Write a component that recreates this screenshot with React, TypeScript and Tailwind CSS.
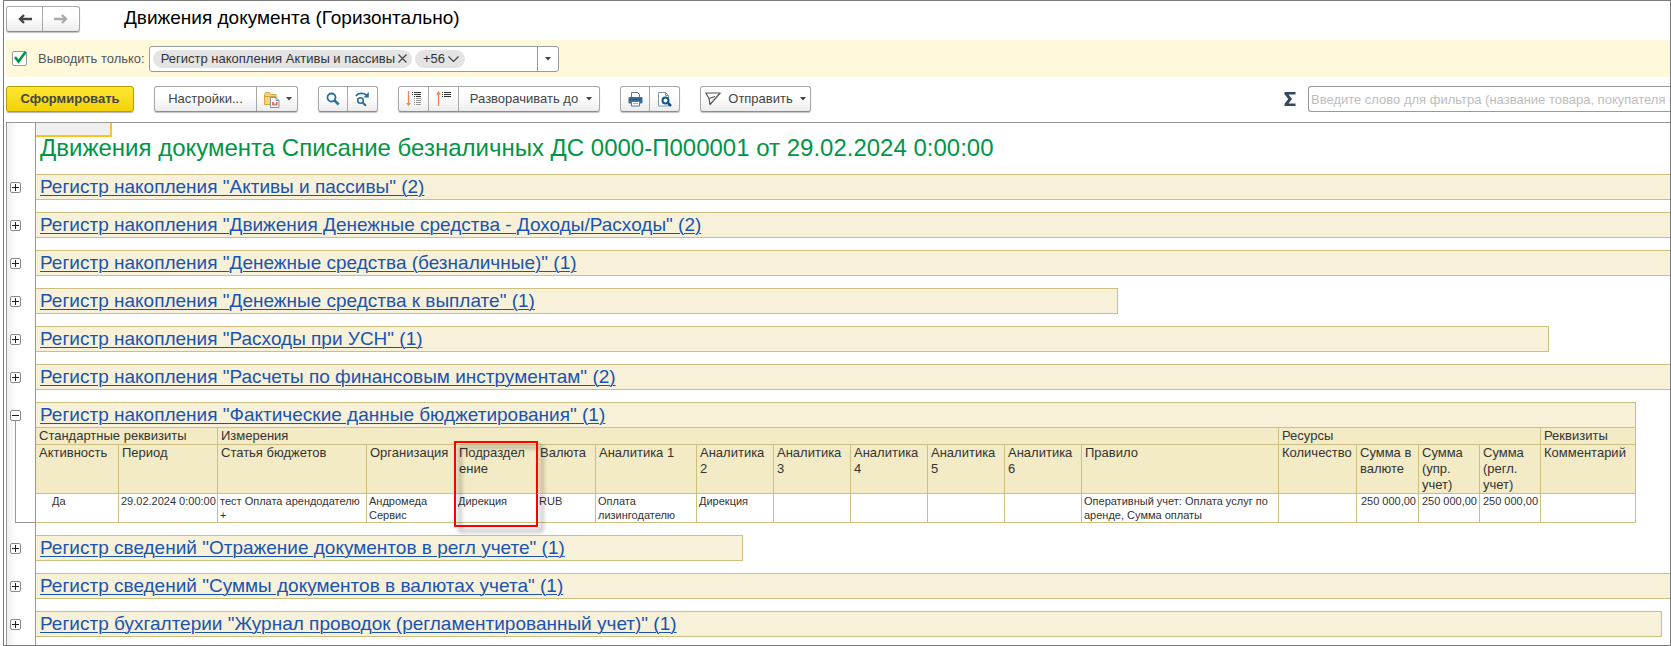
import type { ReactNode } from "react";

type Register = {
  title: string;
  // Class for the bar's width; bars without it run past the right edge
  width?: string;
  expanded?: boolean;
};

const registers: Register[] = [
  { title: 'Регистр накопления "Активы и пассивы" (2)' },
  {
    title: 'Регистр накопления "Движения Денежные средства - Доходы/Расходы" (2)',
  },
  { title: 'Регистр накопления "Денежные средства (безналичные)" (1)' },
  {
    title: 'Регистр накопления "Денежные средства к выплате" (1)',
    width: "w-[1082px] border-r",
  },
  {
    title: 'Регистр накопления "Расходы при УСН" (1)',
    width: "w-[1513px] border-r",
  },
  { title: 'Регистр накопления "Расчеты по финансовым инструментам" (2)' },
  {
    title: 'Регистр накопления "Фактические данные бюджетирования" (1)',
    width: "w-[1600px] border-r",
    expanded: true,
  },
  {
    title: 'Регистр сведений "Отражение документов в регл учете" (1)',
    width: "w-[707px] border-r",
  },
  { title: 'Регистр сведений "Суммы документов в валютах учета" (1)' },
  {
    title:
      'Регистр бухгалтерии "Журнал проводок (регламентированный учет)" (1)',
    width: "w-[1626px] border-r",
  },
];

const columns = [
  { name: "Активность", width: 83, value: "Да", cell: "pl-4" },
  {
    name: "Период",
    width: 99,
    value: "29.02.2024 0:00:00",
    cell: "whitespace-nowrap",
  },
  { name: "Статья бюджетов", width: 149, value: "тест Оплата арендодателю +" },
  { name: "Организация", width: 89, value: "Андромеда Сервис" },
  { name: "Подразделение", width: 81, value: "Дирекция", marked: true },
  { name: "Валюта", width: 59, value: "RUB" },
  { name: "Аналитика 1", width: 101, value: "Оплата лизингодателю" },
  { name: "Аналитика 2", width: 77, value: "Дирекция" },
  { name: "Аналитика 3", width: 77, value: "" },
  { name: "Аналитика 4", width: 77, value: "" },
  { name: "Аналитика 5", width: 77, value: "" },
  { name: "Аналитика 6", width: 77, value: "" },
  {
    name: "Правило",
    width: 197,
    value: "Оперативный учет: Оплата услуг по аренде, Сумма оплаты",
  },
  { name: "Количество", width: 78, value: "" },
  { name: "Сумма в валюте", width: 62, value: "250 000,00", cell: "text-right" },
  {
    name: "Сумма (упр. учет)",
    width: 61,
    value: "250 000,00",
    cell: "text-right",
  },
  {
    name: "Сумма (регл. учет)",
    width: 61,
    value: "250 000,00",
    cell: "text-right",
  },
  { name: "Комментарий", width: 95, value: "" },
];

const groups = [
  { name: "Стандартные реквизиты", span: 2 },
  { name: "Измерения", span: 11 },
  { name: "Ресурсы", span: 4 },
  { name: "Реквизиты", span: 1 },
];

function Caret() {
  return (
    <svg width="6" height="4" viewBox="0 0 6 4" aria-hidden="true">
      <path d="M0 0h6L3 3.5z" fill="#444" />
    </svg>
  );
}

function ButtonGroup({ children }: { children: ReactNode }) {
  return (
    <div className="flex h-[26px] shrink-0 divide-x divide-[#a8a8a8] rounded-[3px] border border-[#a8a8a8] border-b-[#8c8c8c] bg-linear-to-b from-white from-40% to-[#ececec] shadow-[0_1px_1px_rgba(0,0,0,0.25)]">
      {children}
    </div>
  );
}

function ToolButton({
  label,
  className,
  children,
}: {
  label?: string;
  className: string;
  children: ReactNode;
}) {
  return (
    <button
      type="button"
      aria-label={label}
      className={`flex items-center justify-center text-[#444] ${className}`}
    >
      {children}
    </button>
  );
}

function Arrow({ color, flip }: { color: string; flip?: boolean }) {
  return (
    <svg
      width="14"
      height="12"
      viewBox="0 0 14 12"
      fill="none"
      stroke={color}
      strokeWidth="2.4"
      className={flip ? "rotate-180" : ""}
      aria-hidden="true"
    >
      <path d="M14 6H2M6 2 2 6l4 4" />
    </svg>
  );
}

function FolderIcon() {
  return (
    <svg width="17" height="17" viewBox="0 0 17 17" aria-hidden="true">
      <path
        d="M1.5 13.5V3.5l1-2h4l1 2h5.5v10z"
        fill="#f5d47c"
        stroke="#d0a548"
      />
      <path d="M1.5 5.5h11.5" stroke="#d0a548" />
      <path d="M7.5 6.5h5.5l3 3v7H7.5z" fill="#fff" stroke="#7d93a8" />
      <path d="M13 6.5v3h3" fill="none" stroke="#7d93a8" />
      <path d="M10 14.5V11" stroke="#e53935" strokeWidth="1.5" />
      <path d="M12 14.5v-2" stroke="#43a047" strokeWidth="1.5" />
      <path d="M13.8 14.5V11" stroke="#e53935" strokeWidth="1.2" />
    </svg>
  );
}

function SearchIcon() {
  return (
    <svg
      width="14"
      height="14"
      viewBox="0 0 14 14"
      fill="none"
      stroke="#2a6f9e"
      aria-hidden="true"
    >
      <circle cx="5.5" cy="5.5" r="4" strokeWidth="1.8" />
      <path d="m8.5 8.5 4.2 4" strokeWidth="2.6" />
    </svg>
  );
}

function SearchNextIcon() {
  return (
    <svg
      width="15"
      height="15"
      viewBox="0 0 15 15"
      fill="none"
      stroke="#2a6f9e"
      aria-hidden="true"
    >
      <path d="M1 4C3 .8 8.5.8 11.5 3" strokeWidth="1.8" />
      <path d="M13.8 0v5.5H8.5z" fill="#2a6f9e" stroke="none" />
      <circle cx="5.5" cy="8.5" r="2.8" strokeWidth="1.6" />
      <path d="m7.8 10.8 3.2 3" strokeWidth="2.2" />
    </svg>
  );
}

function ExpandIcon() {
  return (
    <svg width="16" height="16" viewBox="0 0 16 16" aria-hidden="true">
      <path d="M2.5 0v13" stroke="#f0855a" strokeWidth="1.4" />
      <path d="M0 12h5l-2.5 3z" fill="#f0855a" />
      <path
        d="M6 1.5h1M8 1.5h7M6 3.5h1M8 3.5h7M8 5.5h1M10 5.5h5"
        stroke="#333"
      />
      <path
        d="M8 7.5h1M10 7.5h5M8 9.5h1M10 9.5h5M8 11.5h1M10 11.5h5M8 13.5h1M10 13.5h5"
        stroke="#999"
      />
    </svg>
  );
}

function CollapseIcon() {
  return (
    <svg width="16" height="16" viewBox="0 0 16 16" aria-hidden="true">
      <path d="M2.5 2v13" stroke="#f0855a" strokeWidth="1.4" />
      <path d="M0 3.5h5L2.5 0z" fill="#f0855a" />
      <path
        d="M6 1.5h1M8 1.5h7M6 3.5h1M8 3.5h7M6 5.5h1M8 5.5h7"
        stroke="#333"
      />
    </svg>
  );
}

function PrintIcon() {
  return (
    <svg width="15" height="15" viewBox="0 0 15 15" aria-hidden="true">
      <path d="M3.5 5.5V.5h6l2 2v3" fill="#fff" stroke="#5b7891" />
      <rect x="0.5" y="5" width="14" height="6.5" rx="1" fill="#3d6c95" />
      <path d="M2 7.5h11" stroke="#2d5679" />
      <path d="M3.5 9.5h8V14h-8z" fill="#fff" stroke="#5b7891" />
      <path d="M5 11.5h5" stroke="#9db4c8" />
    </svg>
  );
}

function PreviewIcon() {
  return (
    <svg width="14" height="15" viewBox="0 0 14 15" fill="none" aria-hidden="true">
      <path d="M.5.5h7l3 3V14H.5z" fill="#fff" stroke="#8296a8" />
      <path d="M7.5.5v3h3" stroke="#8296a8" />
      <circle cx="7.5" cy="8.5" r="3" fill="#fff" stroke="#10568a" strokeWidth="2" />
      <path d="m9.5 10.5 3.5 3.5" stroke="#10568a" strokeWidth="2.5" />
    </svg>
  );
}

function SendIcon() {
  return (
    <svg
      width="16"
      height="14"
      viewBox="0 0 16 14"
      fill="none"
      stroke="#555"
      strokeWidth="1.2"
      strokeLinejoin="round"
      aria-hidden="true"
    >
      <path d="M.8 1h14.4L5 12.5l-1-6zM4 6.5l6-2" />
    </svg>
  );
}

function Header() {
  return (
    <header className="flex h-[39px] items-start pt-[5px]">
      <ButtonGroup>
        <ToolButton label="Назад" className="w-9">
          <Arrow color="#444" />
        </ToolButton>
        <ToolButton label="Вперед" className="w-9">
          <Arrow color="#aaa" flip />
        </ToolButton>
      </ButtonGroup>
      <h1 className="ml-11 text-[19px] leading-6 whitespace-nowrap text-black">
        Движения документа (Горизонтально)
      </h1>
    </header>
  );
}

function FilterBar() {
  return (
    <div className="flex h-[37px] items-center bg-[#fff9db] pl-1.5">
      <label className="flex items-center whitespace-nowrap text-[#555]">
        <span className="relative mr-[11px] flex size-[15px]">
          <input
            type="checkbox"
            defaultChecked
            className="size-[15px] appearance-none rounded-[2px] border border-[#9a9a9a] bg-white"
          />
          <svg
            className="pointer-events-none absolute inset-0"
            width="15"
            height="15"
            viewBox="0 0 15 15"
            fill="none"
            aria-hidden="true"
          >
            <path d="m3 6 3.5 4.5L13.5 1" stroke="#009646" strokeWidth="2.6" />
          </svg>
        </span>
        Выводить только:
      </label>
      <div className="ml-1 flex h-[26px] w-[410px] items-center rounded-[3px] border border-[#9a9a9a] bg-white pl-[3px] text-[#333]">
        <span className="flex h-[18px] items-center gap-[3px] rounded-full bg-[#e4e4e4] pr-[5px] pl-2 whitespace-nowrap">
          Регистр накопления Активы и пассивы
          <button type="button" aria-label="Убрать">
            <svg
              width="9"
              height="9"
              viewBox="0 0 9 9"
              stroke="#444"
              strokeWidth="1.2"
              aria-hidden="true"
            >
              <path d="m.5.5 8 8M8.500.5l-8 8" />
            </svg>
          </button>
        </span>
        <button
          type="button"
          className="ml-[3px] flex h-[18px] items-center gap-[3px] rounded-full bg-[#e4e4e4] pr-1.5 pl-2"
        >
          +56
          <svg
            width="11"
            height="6"
            viewBox="0 0 11 6"
            fill="none"
            stroke="#444"
            strokeWidth="1.2"
            aria-hidden="true"
          >
            <path d="m.5.5 5 5 5-5" />
          </svg>
        </button>
        <button
          type="button"
          aria-label="Выбрать"
          className="ml-auto flex h-full w-[21px] items-center justify-center border-l border-[#9a9a9a]"
        >
          <Caret />
        </button>
      </div>
    </div>
  );
}

function Toolbar() {
  return (
    <div className="flex h-[45px] items-start gap-5 overflow-hidden pt-[9px] whitespace-nowrap">
      <button
        type="button"
        className="h-[26px] w-32 shrink-0 rounded-[3px] border border-[#b59d00] bg-linear-to-b from-[#ffe62e] to-[#f2d200] font-bold text-[#444] shadow-[0_1px_1px_rgba(0,0,0,0.3)]"
      >
        Сформировать
      </button>
      <ButtonGroup>
        <ToolButton className="w-[102px]">Настройки...</ToolButton>
        <ToolButton label="Варианты отчета" className="w-10 gap-1.5">
          <FolderIcon />
          <Caret />
        </ToolButton>
      </ButtonGroup>
      <ButtonGroup>
        <ToolButton label="Найти" className="w-[29px]">
          <SearchIcon />
        </ToolButton>
        <ToolButton label="Найти далее" className="w-[29px]">
          <SearchNextIcon />
        </ToolButton>
      </ButtonGroup>
      <ButtonGroup>
        <ToolButton label="Развернуть группы" className="w-[30px]">
          <ExpandIcon />
        </ToolButton>
        <ToolButton label="Свернуть группы" className="w-[30px]">
          <CollapseIcon />
        </ToolButton>
        <ToolButton className="w-[140px] gap-2 pl-1">
          Разворачивать до
          <Caret />
        </ToolButton>
      </ButtonGroup>
      <ButtonGroup>
        <ToolButton label="Печать" className="w-[29px]">
          <PrintIcon />
        </ToolButton>
        <ToolButton label="Предварительный просмотр" className="w-[29px]">
          <PreviewIcon />
        </ToolButton>
      </ButtonGroup>
      <ButtonGroup>
        <ToolButton className="w-[109px] gap-[7px]">
          <SendIcon />
          Отправить
          <Caret />
        </ToolButton>
      </ButtonGroup>
      <div className="ml-auto flex h-[26px] w-[386px] shrink-0 items-center">
        <svg width="12" height="14" viewBox="0 0 12 14" aria-hidden="true">
          <path
            d="M.5 0h11v2.5h-7L8 7l-3.500 4.500h7V14H.5v-2.200L4.300 7 .5 2.200z"
            fill="#34495e"
          />
        </svg>
        <input
          type="text"
          aria-label="Фильтр"
          placeholder="Введите слово для фильтра (название товара, покупателя и пр.)"
          className="ml-3 h-[26px] min-w-0 flex-1 rounded-l-[3px] border border-r-0 border-[#9a9a9a] bg-white pl-0.5 text-[#333] placeholder:text-[#bdbdbd]"
        />
      </div>
    </div>
  );
}

function BudgetTable() {
  return (
    <table className="w-[1600px] table-fixed border-separate border-spacing-0 text-left text-[#333]">
      <colgroup>
        {columns.map((column) => (
          <col key={column.name} style={{ width: column.width }} />
        ))}
      </colgroup>
      <thead className="bg-[#f3ebc5] text-[13px] leading-4">
        <tr className="h-[17px]">
          {groups.map((group) => (
            <th
              key={group.name}
              colSpan={group.span}
              className="border-r border-b border-[#ccbf80] px-[3px] py-0 font-normal"
            >
              {group.name}
            </th>
          ))}
        </tr>
        <tr className="h-[49px]">
          {columns.map((column) => (
            <th
              key={column.name}
              className={`relative border-r border-b border-[#ccbf80] py-0 pl-[3px] align-top font-normal wrap-anywhere ${column.marked ? "pr-2" : "pr-0"}`}
            >
              {column.name}
              {column.marked && (
                <span className="pointer-events-none absolute -top-1 -left-0.5 h-[86px] w-[84px] border-2 border-[#ff0000] drop-shadow-[5px_5px_2px_rgba(0,0,0,0.4)]" />
              )}
            </th>
          ))}
        </tr>
      </thead>
      <tbody className="bg-white text-[11px] leading-[14px]">
        <tr className="h-[29px]">
          {columns.map((column) => (
            <td
              key={column.name}
              className={`border-r border-b border-[#ccbf80] px-0.5 py-0 align-top ${column.cell ?? ""}`}
            >
              {column.value}
            </td>
          ))}
        </tr>
      </tbody>
    </table>
  );
}

function RegisterRow({ title, width, expanded }: Register) {
  return (
    <section className="group flex">
      <div className="flex w-[29px] shrink-0 flex-col border-r border-[#999] pl-[3px]">
        <button
          type="button"
          aria-label={expanded ? "Свернуть" : "Развернуть"}
          className="mt-2 size-[11px] shrink-0 rounded-[2px] border border-[#888] bg-white"
        >
          <svg width="9" height="9" viewBox="0 0 9 9" stroke="#222" aria-hidden="true">
            <path d={expanded ? "M1 4.5h7" : "M1 4.5h7M4.5 1v7"} />
          </svg>
        </button>
        {expanded && (
          <div className="mb-3 ml-[5px] flex-1 border-b border-l border-[#999]" />
        )}
      </div>
      <div className="min-w-0 flex-1 pb-3 group-last:pb-2">
        <h3
          className={`h-[26px] border-y border-[#ccbf80] bg-[#f7f1da] pl-1 whitespace-nowrap ${width ?? ""}`}
        >
          <a
            href="#"
            className="text-[19px] leading-6 text-[#1a54b0] underline decoration-1 underline-offset-2"
          >
            {title}
          </a>
        </h3>
        {expanded && <BudgetTable />}
      </div>
    </section>
  );
}

export default function App() {
  return (
    <div className="flex min-h-screen flex-col overflow-hidden bg-white pl-[3px] font-['Liberation_Sans',Arial,sans-serif] text-[13px] leading-4">
      <div className="flex flex-1 flex-col border border-[#7a7a7a] pl-0.5">
        <Header />
        <FilterBar />
        <Toolbar />
        <main className="flex flex-1 flex-col overflow-hidden border-t border-l border-[#999] bg-linear-to-r from-[#f0f0f0] to-white to-[10px]">
          <div className="flex">
            <div className="w-[29px] shrink-0 border-r border-[#999]" />
            <div className="h-[51px]">
              <div className="h-3.5 w-[76px] border-r-2 border-b-2 border-[#f7c51e] bg-[#f0f0f0]" />
              <h2 className="pl-1 text-[24px] leading-[22px] whitespace-nowrap text-[#009646]">
                Движения документа Списание безналичных ДС 0000-П000001 от
                29.02.2024 0:00:00
              </h2>
            </div>
          </div>
          <div>
            {registers.map((register) => (
              <RegisterRow key={register.title} {...register} />
            ))}
          </div>
          <div className="w-[29px] flex-1 border-r border-[#999]" />
        </main>
      </div>
    </div>
  );
}
